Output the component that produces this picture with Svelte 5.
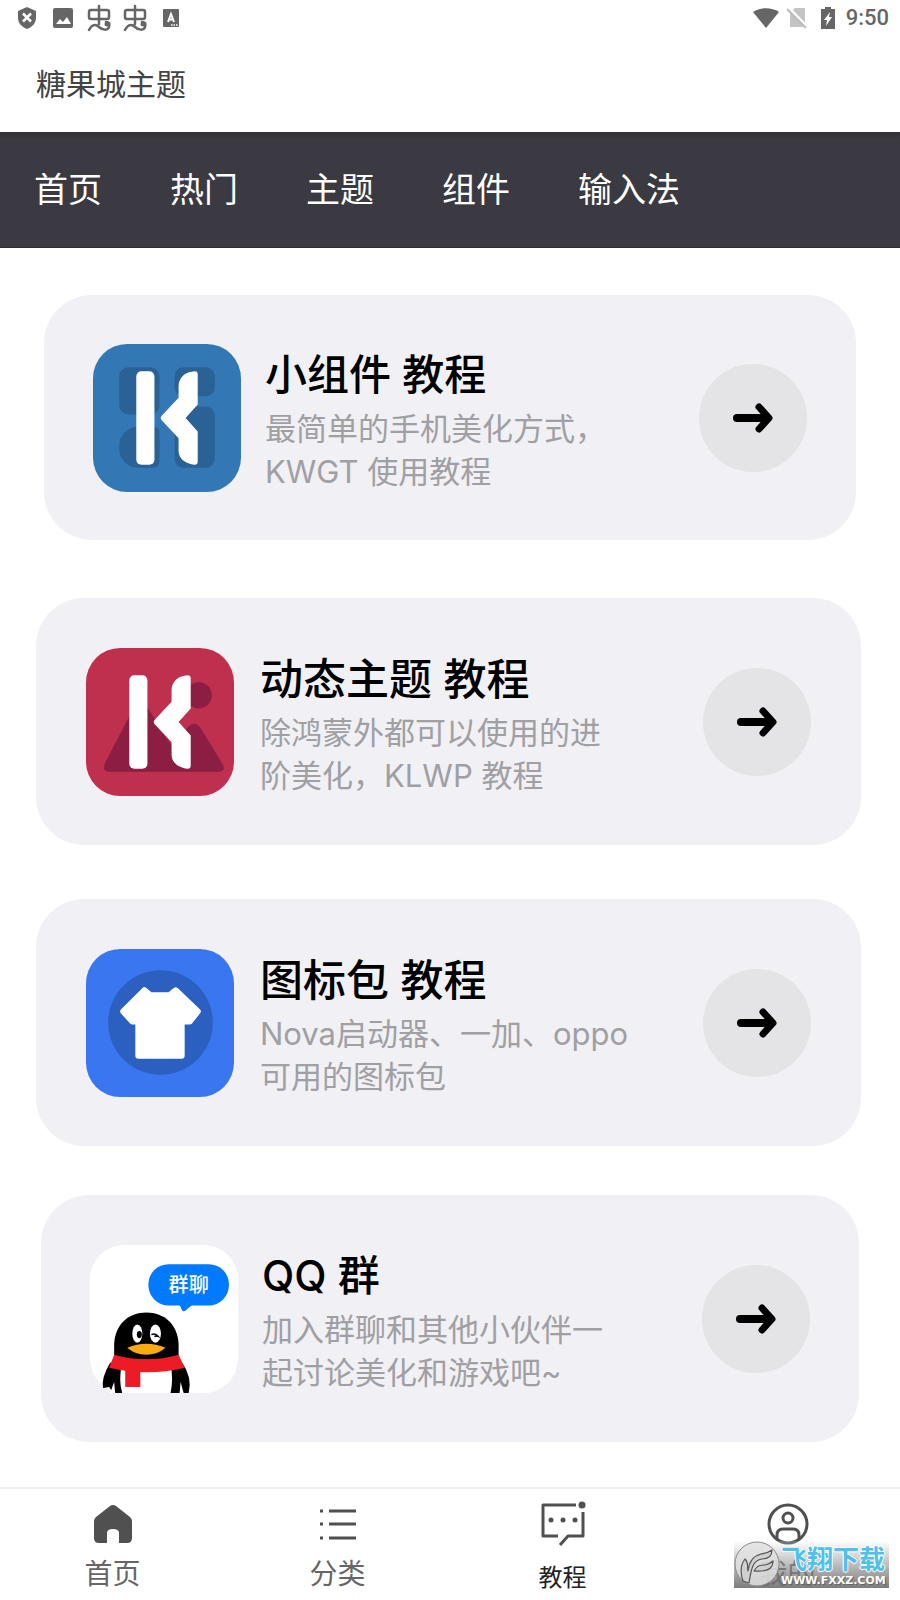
<script>
	const categories = ['首页', '热门', '主题', '组件', '输入法'];

	const cards = [
		{ id: 'widget', title: '小组件 教程', lines: ['最简单的手机美化方式，', 'KWGT 使用教程'] },
		{ id: 'wallpaper', title: '动态主题 教程', lines: ['除鸿蒙外都可以使用的进', '阶美化，KLWP 教程'] },
		{ id: 'iconpack', title: '图标包 教程', lines: ['Nova启动器、一加、oppo', '可用的图标包'] },
		{ id: 'group', title: 'QQ 群', lines: ['加入群聊和其他小伙伴一', '起讨论美化和游戏吧~'] }
	];

	const tabs = [
		{ id: 'home', label: '首页' },
		{ id: 'list', label: '分类' },
		{ id: 'guide', label: '教程' },
		{ id: 'me', label: '我的' }
	];

	let current = 'guide';
</script>

{#snippet letterK()}
	<rect x="43" y="27" width="18" height="93" rx="5" fill="#fff" />
	<path
		fill="#fff"
		d="M101 27q3 0 3 3v30L92 73.500l12 13.500v30q0 3-3 3C92 119 85 114 85 106V93.500L68.500 76q-2.500-2.500 0-5L85 53.500V42C85 33 92 27.500 101 27z"
	/>
{/snippet}

{#snippet bug()}
	<svg width="24" height="28" viewBox="0 0 24 28">
		<g fill="none" stroke="#666" stroke-width="2.500" stroke-linecap="round" stroke-linejoin="round">
			<rect x="2" y="6" width="20" height="9" rx="2" />
			<path d="M12 2v18M2 26c3-6 7-6 10-3s9 4 10 0 0-5-3-5" />
		</g>
		<circle cx="20" cy="20" r="2.500" fill="#666" />
	</svg>
{/snippet}

<div class="page">
	<div class="status">
		<div class="notices">
			<span>
				<svg width="20" height="24" viewBox="0 0 20 24">
					<path fill="#666" d="M10 1l9 4v7c0 5-4 9-9 11-5-2-9-6-9-11V5z" />
					<path stroke="#fff" stroke-width="2.500" d="M6 7.500l8 8m0-8l-8 8" />
				</svg>
			</span>
			<span>
				<svg width="20" height="20" viewBox="0 0 20 20">
					<rect width="20" height="20" rx="2" fill="#666" />
					<path fill="#fff" d="M3 16l4-5 3 3 4-5 4 7z" />
				</svg>
			</span>
			<span>{@render bug()}</span>
			<span>{@render bug()}</span>
			<span>
				<svg width="16" height="18" viewBox="0 0 16 18">
					<rect width="16" height="18" rx="1" fill="#666" />
					<path fill="none" stroke="#fff" stroke-width="2" d="M5 13l3-8 3 8M6 10.500h4" />
					<path stroke="#fff" stroke-width="1.500" stroke-dasharray="1.500 1" d="M8 16h7" />
				</svg>
			</span>
		</div>
		<div class="system">
			<span>
				<svg width="26" height="20" viewBox="0 0 26 20">
					<path fill="#666" d="M0 4C8-1 18-1 26 4L13 20z" />
				</svg>
			</span>
			<span>
				<svg width="20" height="22" viewBox="0 0 20 22">
					<path fill="#c4c4c4" d="M8 1h9q1 0 1 1v18H3V6z" />
					<path stroke="#fff" stroke-width="3" d="M1 0l19 20" />
					<path stroke="#bbb" stroke-width="2" d="M0 2l19 19" />
				</svg>
			</span>
			<span>
				<svg width="14" height="22" viewBox="0 0 14 22">
					<path fill="#666" d="M4 0h6v2h4v20H0V2h4z" />
					<path fill="#fff" d="M9 5l-6 8h3l-1 6 6-9H8z" />
				</svg>
			</span>
			<time>9:50</time>
		</div>
	</div>

	<header>
		<h1>糖果城主题</h1>
	</header>

	<nav class="categories">
		{#each categories as name}
			<a href="#{name}">{name}</a>
		{/each}
	</nav>

	<main>
		{#each cards as card}
			<a class="card {card.id}" href="#{card.id}">
				<svg class="logo" viewBox="0 0 147 147">
					{#if card.id === 'widget'}
						<rect width="147" height="147" rx="34" fill="#3377b5" />
						<g fill="#2b6296">
							<rect x="26" y="23" width="40" height="47" rx="9" />
							<rect x="81" y="23" width="40" height="29" rx="9" />
							<rect x="26" y="82" width="40" height="41" rx="19" />
							<path d="M48 82h11q7 0 7 7v27q0 7-7 7H48z" />
							<rect x="81" y="62" width="40" height="61" rx="9" />
						</g>
						{@render letterK()}
					{:else if card.id === 'wallpaper'}
						<rect width="147" height="147" rx="34" fill="#bf2f4e" />
						<g fill="#8c1d43">
							<circle cx="112" cy="47" r="13" />
							<path d="M46 62q7-13 14-5l25 40 16-18q7-8 13 1l22 36q3 7-5 7H24q-9 0-5-9z" />
						</g>
						{@render letterK()}
					{:else if card.id === 'iconpack'}
						<rect width="147" height="147" rx="34" fill="#3a76ef" />
						<circle cx="74" cy="73" r="52" fill="#2b60c0" />
						<path
							fill="#fff"
							stroke="#fff"
							stroke-width="6"
							stroke-linejoin="round"
							d="M58 41l6 5h19l6-5 22 21-8 10h-8v34H52V72h-6l-9-10z"
						/>
					{:else}
						<rect width="147" height="147" rx="34" fill="#fff" />
						<rect x="58" y="19" width="80" height="41" rx="20" fill="#007aff" />
						<path fill="#007aff" d="M88 59q2 1 3 5 1 3 4 1l7-6z" />
						<text x="98" y="47" text-anchor="middle">群聊</text>
						<path d="M20 117Q11 132 13 142l6-1 4 6h75q4-15-7-31z" />
						<path fill="#fff" d="M32 117h48q3 17 0 30H32q-4-13 0-30zM20 147l4-11 1 11zM90 136l3 11h-4z" />
						<path d="M24 114V98C25 79 38 67 56 67s31 12 32 31v16z" />
						<path fill="#eb1c26" d="M24 109q32 9 64 0l6 13q-37 9-75 0z" />
						<path fill="#eb1c26" d="M35 122h15v19H35z" />
						<g fill="#fff">
							<ellipse cx="47" cy="88" rx="5" ry="9" />
							<ellipse cx="65" cy="88" rx="5.500" ry="9" />
						</g>
						<ellipse cx="49" cy="89" rx="2.500" ry="3.500" />
						<path fill="none" stroke="#000" stroke-width="1.500" d="M61 89q4-2 7 2-3-1-4 0" />
						<path fill="#fbab10" d="M37 102q19-8 38 0-8 7-19 7t-19-7z" />
					{/if}
				</svg>
				<div class="text">
					<h2>{card.title}</h2>
					<p>
						{card.lines[0]}<br />{card.lines[1]}
					</p>
				</div>
				<svg class="arrow" viewBox="0 0 108 108">
					<circle cx="54" cy="54" r="54" fill="#e4e4e7" />
					<g fill="none" stroke="#000" stroke-linecap="round" stroke-linejoin="round">
						<path stroke-width="8" d="M38 54h30" />
						<path stroke-width="7" d="M60 43l10 11-10 11" />
					</g>
				</svg>
			</a>
		{/each}
	</main>

	<nav class="tabs">
		{#each tabs as tab}
			<button class:active={current === tab.id} on:click={() => (current = tab.id)}>
				<svg width="46" height="46" viewBox="0 0 46 46">
					{#if tab.id === 'home'}
						<path
							fill="#505050"
							d="M20 6q3-2 6 0l14 11q2 2 2 4v17q0 5-5 5h-8V33q0-4-6-4t-6 4v10H9q-5 0-5-5V21q0-2 2-4z"
						/>
					{:else if tab.id === 'list'}
						<path stroke="#505050" stroke-width="3" d="M5 11h3M5 24h3M5 38h3M14 11h27M14 24h27M14 38h27" />
					{:else if tab.id === 'guide'}
						<g fill="none" stroke="#505050" stroke-width="3">
							<path stroke-linejoin="round" d="M36 5H3v31h15M43 12v24H28l-8 9" />
						</g>
						<g fill="#505050">
							<circle cx="42" cy="5" r="3.500" />
							<circle cx="11" cy="20" r="2.500" />
							<circle cx="23" cy="20" r="2.500" />
							<circle cx="35" cy="20" r="2.500" />
						</g>
					{:else}
						<g fill="none" stroke="#505050" stroke-width="3">
							<circle cx="23" cy="24" r="19" />
							<circle cx="23" cy="18" r="5" />
							<path d="M12 39v-4q0-6 6-6h10q6 0 6 6v4" />
						</g>
					{/if}
				</svg>
				<span>{tab.label}</span>
			</button>
		{/each}

		<div class="stamp">
			<svg width="47" height="47" viewBox="0 0 47 47">
				<circle cx="23" cy="23" r="22" fill="#e0e0e0" fill-opacity="0.850" stroke="#888" />
				<g fill="#cfcfcf" stroke="#555" stroke-width="1.200" stroke-linejoin="round">
					<path d="M9 40C6 31 7 23 11 18c4 4 2 8 3 12 1-9 5-15 13-17 5-1 7-1 11-4 0 6-4 9-10 9-10 1-11 12-13 24z" />
					<path d="M20 30c3-6 7-6 11-6 4-1 6-2 8-4 0 8-6 11-19 10z" />
				</g>
			</svg>
			<div class="stamp-text">
				<strong>飞翔下载</strong>
				<span>WWW.FXXZ.COM</span>
			</div>
		</div>
	</nav>
</div>

<style>
	:global(*) {
		box-sizing: border-box;
	}

	:global(body) {
		margin: 0;
		background: #fff;
		font-family: 'Noto Sans CJK SC', sans-serif;
	}

	.page {
		min-height: 100vh;
		display: flex;
		flex-direction: column;
	}

	svg {
		display: block;
		flex: none;
	}

	a {
		color: inherit;
		text-decoration: none;
	}

	.status {
		height: 36px;
		padding: 0 11px 0 9px;
		display: flex;
		justify-content: space-between;
	}

	.notices,
	.system {
		display: flex;
		align-items: center;
	}

	.status span {
		display: grid;
		place-items: center;
	}

	.notices span {
		width: 36px;
	}

	.system span {
		width: 31px;
	}

	time {
		margin-left: 2px;
		font: 500 22px/36px Roboto, sans-serif;
		color: #666;
	}

	header {
		height: 96px;
		padding: 0 36px 4px;
		display: flex;
		align-items: center;
	}

	h1 {
		margin: 0;
		font-size: 30px;
		font-weight: 400;
		color: #444;
	}

	.categories {
		height: 116px;
		padding-bottom: 5px;
		display: flex;
		align-items: center;
		background: linear-gradient(#333237, #3b3a42 8px);
		border-bottom: 1px solid #312f36;
		color: #fff;
		font-size: 34px;
	}

	.categories a {
		padding: 0 34px;
	}

	main {
		padding: 47px 0 45px;
	}

	.card {
		height: 247px;
		padding: 0 49px;
		display: flex;
		align-items: center;
		border-radius: 48px;
		background: #f1f0f4;
	}

	.widget {
		height: 245px;
		margin: 0 44px 58px;
	}

	.wallpaper {
		margin: 0 39px 54px 36px;
	}

	.iconpack {
		margin: 0 39px 49px 36px;
	}

	.group {
		margin: 0 41px;
	}

	.wallpaper,
	.iconpack {
		padding: 0 50px;
	}

	.logo {
		width: 148px;
		margin-right: 24px;
	}

	.logo text {
		font-size: 20px;
		font-weight: 500;
		fill: #fff;
	}

	.text {
		flex: 1;
		white-space: nowrap;
		font-family: Inter, 'Noto Sans CJK SC', sans-serif;
	}

	h2 {
		margin: 0;
		font-size: 42px;
		font-weight: 500;
		line-height: 64px;
		color: #000;
	}

	.wallpaper h2,
	.iconpack h2 {
		font-size: 43px;
	}

	p {
		margin: 0;
		font-size: 31px;
		line-height: 43px;
		color: #a09fa4;
	}

	.arrow {
		width: 108px;
	}

	.wallpaper .logo,
	.iconpack .logo {
		margin-right: 26px;
	}

	.tabs {
		position: relative;
		margin-top: auto;
		height: 113px;
		display: grid;
		grid-template-columns: repeat(4, 1fr);
		border-top: 2px solid #f1f1f1;
	}

	button {
		padding: 11px 0 0;
		display: flex;
		flex-direction: column;
		align-items: center;
		gap: 4px;
		border: 0;
		background: none;
		color: #666;
		font-family: inherit;
		font-size: 28px;
		line-height: 44px;
	}

	button.active {
		font-size: 24px;
		line-height: 52px;
		color: #222;
	}

	.stamp {
		position: absolute;
		right: 11px;
		bottom: 12px;
		display: flex;
		width: 155px;
		height: 47px;
		background: linear-gradient(rgba(255, 255, 255, 0.2), rgba(110, 110, 110, 0.9));
	}

	.stamp-text {
		display: flex;
		flex-direction: column;
	}

	.stamp strong {
		font-size: 26px;
		font-weight: 700;
		line-height: 33px;
		color: #4fc0e8;
		text-shadow: 1px 0 #fff, -1px 0 #fff, 0 1px #fff, 0 -1px #fff;
	}

	.stamp span {
		font: 700 11px/13px 'DejaVu Sans', sans-serif;
		color: #fff;
		text-shadow: 1px 1px #666;
	}
</style>
